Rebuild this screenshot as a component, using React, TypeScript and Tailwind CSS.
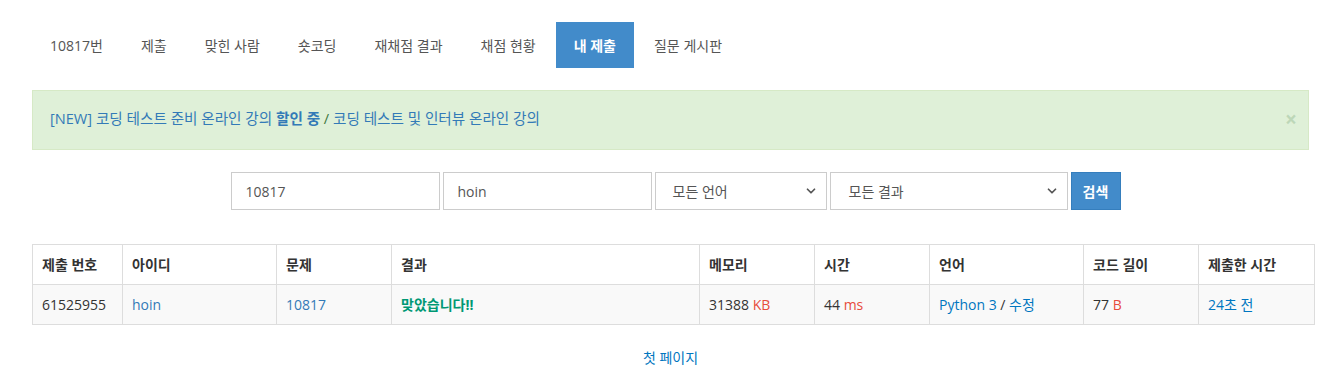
import { ChevronDown } from 'lucide-react'

const font = { fontFamily: '"Open Sans", "Noto Sans CJK KR", sans-serif' }

const tabs = ['10817번', '제출', '맞힌 사람', '숏코딩', '재채점 결과', '채점 현황', '내 제출', '질문 게시판']

const cols = [
  { label: '제출 번호', w: 'w-[90px]' },
  { label: '아이디', w: 'w-[154px]' },
  { label: '문제', w: 'w-[115px]' },
  { label: '결과', w: 'w-[308px]' },
  { label: '메모리', w: 'w-[115px]' },
  { label: '시간', w: 'w-[115px]' },
  { label: '언어', w: 'w-[154px]' },
  { label: '코드 길이', w: 'w-[115px]' },
  { label: '제출한 시간', w: 'w-[116px]' },
]

export default function App() {
  return (
    <div className="min-h-[375px] bg-white text-[14px] text-[#333]" style={font}>
      <div className="mx-[32px] pt-[22px]">
        <ul className="flex h-[46px]">
          {tabs.map((t, i) => (
            <li
              key={t}
              className={`flex h-[46px] items-center px-[18px] ${i > 0 ? 'ml-[2px]' : ''} ${
                t === '내 제출' ? 'bg-[#428bca] font-bold text-white' : 'text-[#555]'
              }`}
            >
              {t}
            </li>
          ))}
        </ul>

        <div className="mt-[22px] flex h-[60px] items-center justify-between border border-[#d6e9c6] bg-[#dff0d8] pl-[17px] pr-[11px]">
          <div className="pb-[2px] text-[14.6px] text-[#337ab7]">
            <span>[NEW] 코딩 테스트 준비 온라인 강의 <b>할인 중</b></span>
            <span className="text-[#3c763d]"> / </span>
            <span>코딩 테스트 및 인터뷰 온라인 강의</span>
          </div>
          <span className="pb-[2px] text-[21px] font-bold leading-none text-[#3c763d] opacity-20">×</span>
        </div>

        <div className="mt-[22px] flex h-[38px] justify-center gap-[3px] pl-[10px]">
          <div className="flex w-[209px] items-center border border-[#ccc] px-[14px] text-[#555]">10817</div>
          <div className="flex w-[209px] items-center border border-[#ccc] px-[14px] text-[#555]">hoin</div>
          <div className="flex w-[172px] items-center justify-between border border-[#ccc] pl-[17px] pr-[8px] text-[#555]">
            <span>모든 언어</span>
            <ChevronDown className="h-[14px] w-[14px]" strokeWidth={3} />
          </div>
          <div className="flex w-[238px] items-center justify-between border border-[#ccc] pl-[18px] pr-[8px] text-[#555]">
            <span>모든 결과</span>
            <ChevronDown className="h-[14px] w-[14px]" strokeWidth={3} />
          </div>
          <div className="flex w-[50px] items-center justify-center border border-[#357ebd] bg-[#428bca] font-bold text-white">
            검색
          </div>
        </div>

        <table className="mt-[34px] w-[1282px] table-fixed border-collapse border border-[#ddd]">
          <thead>
            <tr className="h-[40px]">
              {cols.map(c => (
                <th key={c.label} className={`${c.w} border border-[#ddd] px-[9px] text-left font-bold text-[#333]`}>
                  {c.label}
                </th>
              ))}
            </tr>
          </thead>
          <tbody>
            <tr className="h-[40px] bg-[#f9f9f9]">
              <td className="border border-[#ddd] px-[9px]">61525955</td>
              <td className="border border-[#ddd] px-[9px] text-[#337ab7]">hoin</td>
              <td className="border border-[#ddd] px-[9px] text-[#337ab7]">10817</td>
              <td className="border border-[#ddd] px-[9px] font-bold text-[#009874]">맞았습니다!!</td>
              <td className="border border-[#ddd] px-[9px]">
                31388 <span className="text-[#e74c3c]">KB</span>
              </td>
              <td className="border border-[#ddd] px-[9px]">
                44 <span className="text-[#e74c3c]">ms</span>
              </td>
              <td className="border border-[#ddd] px-[9px] text-[#0076c0]">
                Python 3 <span className="text-[#333]">/</span> 수정
              </td>
              <td className="border border-[#ddd] px-[9px]">
                77 <span className="text-[#e74c3c]">B</span>
              </td>
              <td className="border border-[#ddd] px-[9px] text-[#0076c0]">24초 전</td>
            </tr>
          </tbody>
        </table>

        <div className="mt-[22px] text-center text-[#0076c0]">첫 페이지</div>
      </div>
    </div>
  )
}
